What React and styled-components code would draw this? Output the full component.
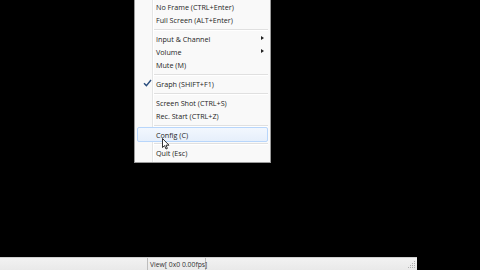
import React from "react";
import styled, { createGlobalStyle } from "styled-components";

const Global = createGlobalStyle`
  html, body { margin: 0; padding: 0; background: #000; overflow: hidden; }
  #root { width: 480px; height: 270px; }
`;

const Screen = styled.div`
  position: relative;
  width: 480px;
  height: 270px;
  background: #000;
  display: flex;
  flex-direction: column;
  font-family: "Open Sans", "Noto Sans", sans-serif;
`;

const Stage = styled.div`
  flex: 1;
  display: flex;
  align-items: flex-start;
  padding-left: 134px;
`;

const Menu = styled.div`
  width: 131px;
  background: #f9f9f9;
  border: 1px solid #9a9a9a;
  border-top: none;
  padding: 0 2px 3px 2px;
  display: flex;
  flex-direction: column;
  position: relative;
  box-sizing: content-box;
  &::before {
    content: "";
    position: absolute;
    left: 17px;
    top: 0;
    bottom: 0;
    width: 1px;
    background: #e4e5e5;
    box-shadow: 1px 0 0 #fff;
  }
`;

const Item = styled.div`
  position: relative;
  height: 13px;
  display: flex;
  align-items: center;
  padding-left: 18px;
  font-size: 7.2px;
  color: #1e1e1e;
  white-space: nowrap;
  border: 1px solid ${(p) => (p.$hover ? "#b8d6fb" : "transparent")};
  border-radius: 2px;
  background: ${(p) => (p.$hover ? "linear-gradient(#f2f7fe, #e6effb)" : "transparent")};
  margin: -1px 0;
  z-index: 1;
`;

const Separator = styled.div`
  height: ${(p) => p.$h || 6}px;
  display: flex;
  align-items: center;
  padding-left: 17px;
  &::after {
    content: "";
    flex: 1;
    height: 1px;
    background: #e0e0e0;
    box-shadow: 0 1px 0 #fff;
  }
`;

const Arrow = styled.span`
  position: absolute;
  right: 3px;
  top: 4px;
  width: 0;
  height: 0;
  border-top: 2.5px solid transparent;
  border-bottom: 2.5px solid transparent;
  border-left: 3px solid #222;
`;

const Check = styled.svg`
  position: absolute;
  left: 5px;
  top: 2px;
`;

const Cursor = styled.svg`
  position: absolute;
  left: 162px;
  top: 138px;
  z-index: 5;
`;

const StatusBar = styled.div`
  height: 12px;
  width: 417px;
  display: flex;
  background: linear-gradient(#f2f2f2, #e9e9e9);
  border-top: 1px solid #d0d0d0;
  position: relative;
`;

const Pane = styled.div`
  width: ${(p) => p.$w}px;
  border-right: 1px solid #bdbdbd;
  font-size: 6.8px;
  color: #333;
  display: flex;
  align-items: center;
  padding-left: 2px;
  white-space: nowrap;
  box-sizing: border-box;
`;

const Grip = styled.svg`
  position: absolute;
  right: 1px;
  bottom: 1px;
`;

export default function App() {
  return (
    <Screen>
      <Global />
      <Stage>
        <Menu>
          <Item>No Frame (CTRL+Enter)</Item>
          <Item>Full Screen (ALT+Enter)</Item>
          <Separator />
          <Item>Input &amp; Channel<Arrow /></Item>
          <Item>Volume<Arrow /></Item>
          <Item>Mute (M)</Item>
          <Separator />
          <Item>
            <Check width="9" height="8" viewBox="0 0 9 8">
              <path d="M1 4.2 L3.4 6.6 L8 1" fill="none" stroke="#2b4e7e" strokeWidth="1.4" />
            </Check>
            Graph (SHIFT+F1)
          </Item>
          <Separator />
          <Item>Screen Shot (CTRL+S)</Item>
          <Item>Rec. Start (CTRL+Z)</Item>
          <Separator />
          <Item $hover>Config (C)</Item>
          <Separator $h={5} />
          <Item>Quit (Esc)</Item>
        </Menu>
      </Stage>
      <StatusBar>
        <Pane $w={148} />
        <Pane $w={58}>View[ 0x0 0.00fps]</Pane>
        <Grip width="8" height="8" viewBox="0 0 8 8">
          <g fill="#b0b0b0">
            <rect x="6" y="0" width="1" height="1" />
            <rect x="4" y="2" width="1" height="1" />
            <rect x="6" y="2" width="1" height="1" />
            <rect x="2" y="4" width="1" height="1" />
            <rect x="4" y="4" width="1" height="1" />
            <rect x="6" y="4" width="1" height="1" />
            <rect x="0" y="6" width="1" height="1" />
            <rect x="2" y="6" width="1" height="1" />
            <rect x="4" y="6" width="1" height="1" />
            <rect x="6" y="6" width="1" height="1" />
          </g>
        </Grip>
      </StatusBar>
      <Cursor width="8" height="12" viewBox="0 0 8 12">
        <path d="M0.5 0.5 L0.5 9.5 L2.6 7.6 L4 11 L5.4 10.4 L4 7.2 L7 7.2 Z" fill="#fff" stroke="#000" strokeWidth="0.8" />
      </Cursor>
    </Screen>
  );
}
